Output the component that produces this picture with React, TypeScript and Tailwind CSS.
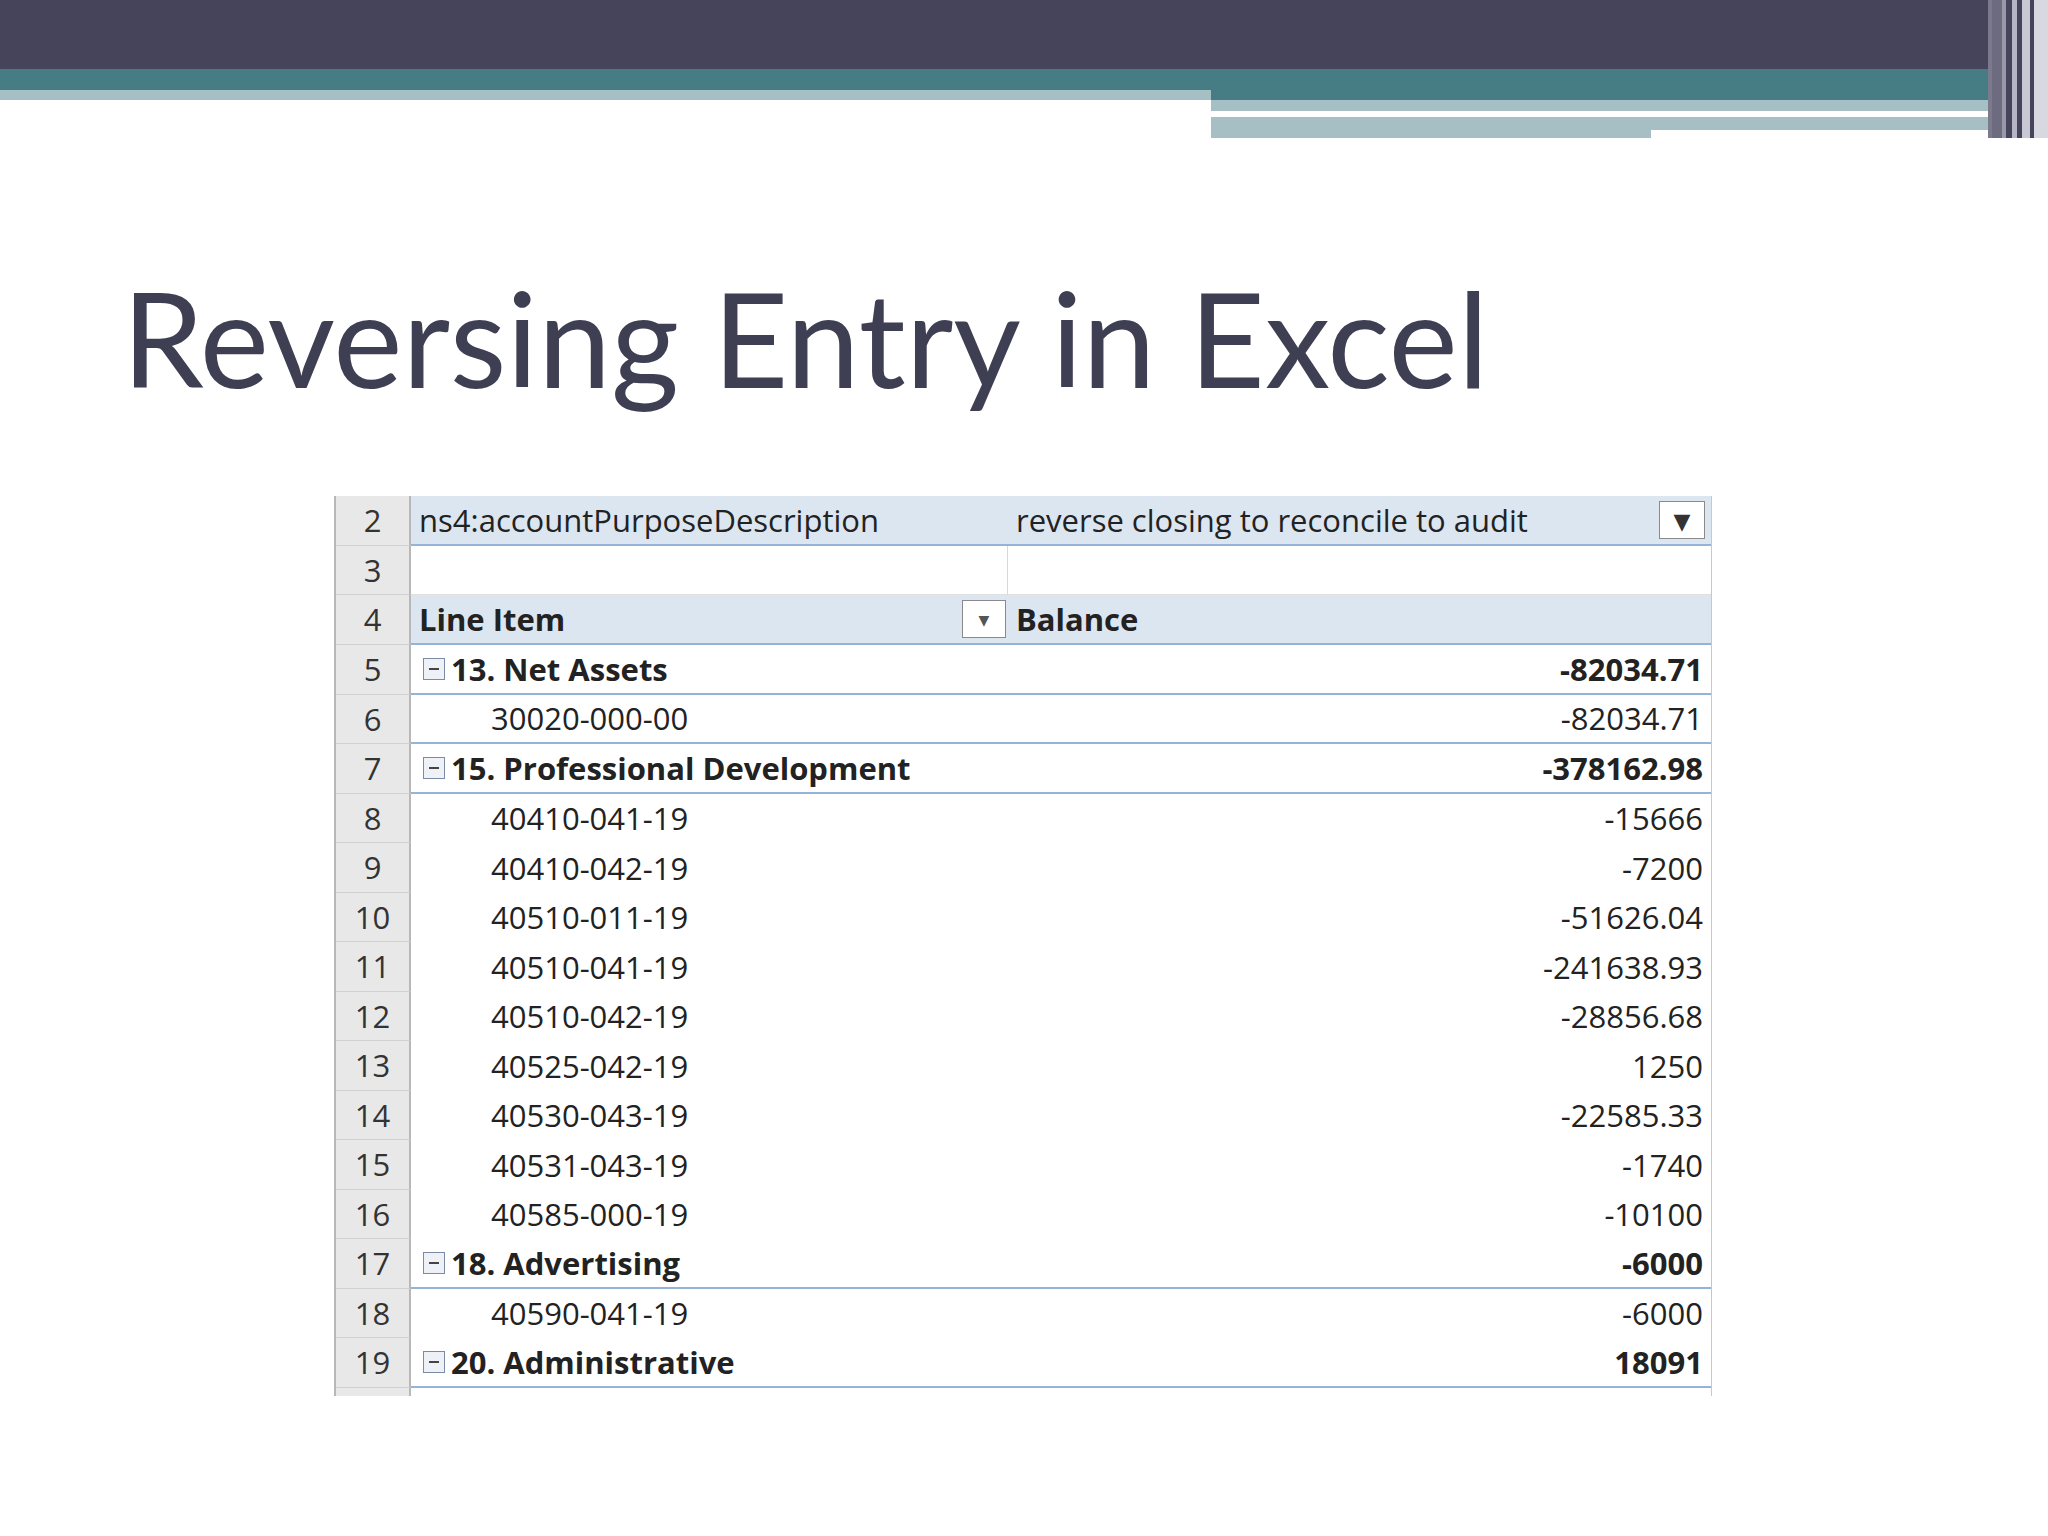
const rows: { n: number; label: string; value: string; kind: "group" | "item" }[] = [
  { n: 5, label: "13. Net Assets", value: "-82034.71", kind: "group" },
  { n: 6, label: "30020-000-00", value: "-82034.71", kind: "item" },
  { n: 7, label: "15. Professional Development", value: "-378162.98", kind: "group" },
  { n: 8, label: "40410-041-19", value: "-15666", kind: "item" },
  { n: 9, label: "40410-042-19", value: "-7200", kind: "item" },
  { n: 10, label: "40510-011-19", value: "-51626.04", kind: "item" },
  { n: 11, label: "40510-041-19", value: "-241638.93", kind: "item" },
  { n: 12, label: "40510-042-19", value: "-28856.68", kind: "item" },
  { n: 13, label: "40525-042-19", value: "1250", kind: "item" },
  { n: 14, label: "40530-043-19", value: "-22585.33", kind: "item" },
  { n: 15, label: "40531-043-19", value: "-1740", kind: "item" },
  { n: 16, label: "40585-000-19", value: "-10100", kind: "item" },
  { n: 17, label: "18. Advertising", value: "-6000", kind: "group" },
  { n: 18, label: "40590-041-19", value: "-6000", kind: "item" },
  { n: 19, label: "20. Administrative", value: "18091", kind: "group" },
];

const RowNum = ({ n }: { n: number }) => (
  <div className="w-[75px] shrink-0 bg-[#e8e8e8] border-r-2 border-[#b8b8b8] border-b border-b-[#d0d0d0] flex items-center justify-center text-[#333]">
    {n}
  </div>
);

const Minus = () => (
  <span className="inline-flex w-[22px] h-[22px] mr-[6px] border border-[#7a8aa8] bg-[#eef1f6] items-center justify-center">
    <span className="block w-[10px] h-[2px] bg-[#444]" />
  </span>
);

export default function App() {
  return (
    <div className="w-[2048px] h-[1536px] bg-white relative overflow-hidden">
      {/* header bands */}
      <div className="h-[69px] bg-[#45445a]" />
      <div className="h-[31px] bg-[#467c84] flex items-end">
        <div className="w-[1211px] h-[10px] bg-[#a5bfc4]" />
      </div>
      <div className="flex">
        <div className="w-[1211px]" />
        <div className="flex-1 flex flex-col">
          <div className="h-[11px] w-[785px] bg-[#a5bfc4]" />
          <div className="h-[6px] w-[686px] bg-white" />
          <div className="flex">
            <div className="h-[21px] w-[440px] bg-[#a5bfc4]" />
            <div className="h-[13px] w-[345px] bg-[#a5bfc4]" />
          </div>
        </div>
      </div>
      <div className="absolute right-0 top-0 h-[138px] w-[60px] flex">
        <div className="w-[4px] bg-[#7b7a8c]" />
        <div className="w-[10px] bg-[#6c6b80]" />
        <div className="w-[4px] bg-[#9898aa]" />
        <div className="w-[6px] bg-[#45445a]" />
        <div className="w-[5px] bg-[#b5b5c5]" />
        <div className="w-[5px] bg-[#45445a]" />
        <div className="w-[8px] bg-[#c8c8d5]" />
        <div className="w-[4px] bg-[#45445a]" />
        <div className="w-[14px] bg-[#d8d8e0]" />
      </div>

      <h1
        className="mt-[134px] ml-[122px] text-[131px] leading-none text-[#3f3f54]"
        style={{ fontFamily: "Lato, 'Open Sans', sans-serif" }}
      >
        Reversing Entry in Excel
      </h1>

      <div
        className="absolute left-[334px] top-[496px] w-[1378px] text-[31px] text-[#222] border-l-2 border-[#b8b8b8] border-r border-r-[#c8c8c8]"
        style={{ fontFamily: "'Open Sans', 'DejaVu Sans', sans-serif" }}
      >
        <div className="flex h-[50px]">
          <RowNum n={2} />
          <div className="flex-1 flex items-center bg-[#dce6f1] border-b-2 border-[#95b3d7]">
            <div className="w-[597px] pl-[8px]">ns4:accountPurposeDescription</div>
            <div className="flex-1 pl-[8px]">reverse closing to reconcile to audit</div>
            <div className="w-[46px] h-[38px] mr-[6px] border border-[#8a8a8a] bg-white flex items-center justify-center text-[#333] text-[22px] font-bold">
              ▼
            </div>
          </div>
        </div>
        <div className="flex h-[49px]">
          <RowNum n={3} />
          <div className="w-[597px] border-r border-[#d8d8d8] border-b border-b-[#e0e0e0]" />
          <div className="flex-1 border-b border-[#e0e0e0]" />
        </div>
        <div className="flex h-[50px]">
          <RowNum n={4} />
          <div className="flex-1 flex items-center bg-[#dce6f1] border-b-2 border-[#95b3d7] font-bold">
            <div className="w-[597px] pl-[8px] flex items-center justify-between pr-[2px]">
              Line Item
              <span className="w-[44px] h-[38px] border border-[#8a8a8a] bg-white flex items-center justify-center text-[14px] text-[#555]">
                ▼
              </span>
            </div>
            <div className="flex-1 pl-[8px]">Balance</div>
          </div>
        </div>
        {rows.map((r) => (
          <div key={r.n} className="flex h-[49.5px]">
            <RowNum n={r.n} />
            <div
              className={`flex-1 flex items-center pr-[8px] ${
                r.kind === "group" ? "font-bold border-b-2 border-[#95b3d7]" : ""
              } ${r.n === 6 ? "border-b-2 border-[#95b3d7]" : ""}`}
            >
              {r.kind === "group" ? (
                <div className="flex items-center pl-[12px]">
                  <Minus />
                  {r.label}
                </div>
              ) : (
                <div className="pl-[80px]">{r.label}</div>
              )}
              <div className="ml-auto">{r.value}</div>
            </div>
          </div>
        ))}
        <div className="flex h-[8px]">
          <div className="w-[75px] bg-[#e8e8e8] border-r-2 border-[#b8b8b8]" />
        </div>
      </div>
    </div>
  );
}
